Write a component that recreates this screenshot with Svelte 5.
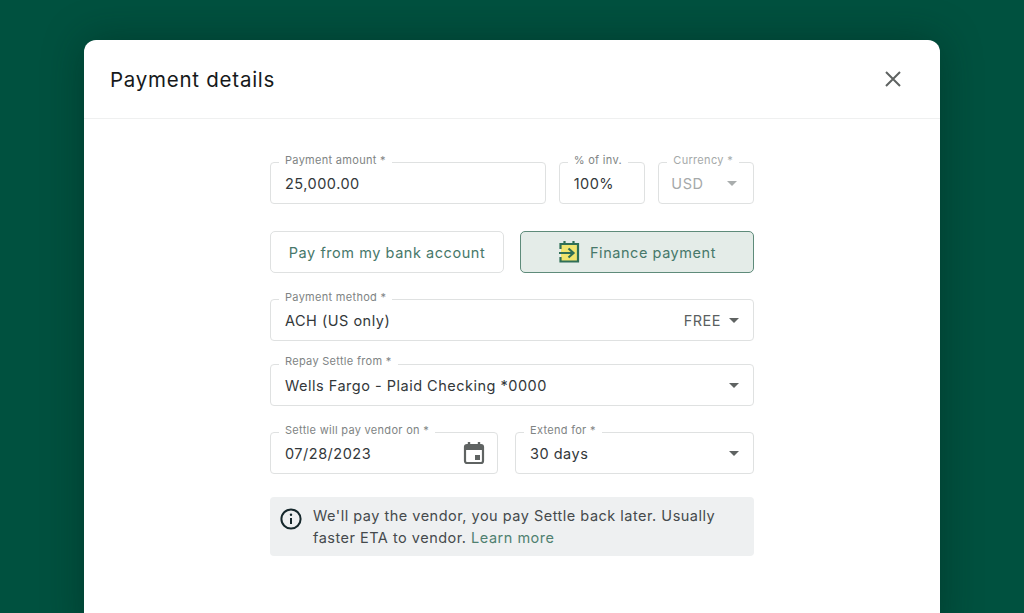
<script>
  const closeIcon = 'M2 2 L16 16 M16 2 L2 16';
</script>

<div class="page">
  <div class="modal">
    <header class="modal-header">
      <h2>Payment details</h2>
      <button class="close-button" aria-label="Close modal">
        <svg width="18" height="18" viewBox="0 0 18 18"><path d={closeIcon} fill="none" stroke="#5f6362" stroke-width="2" /></svg>
      </button>
    </header>

    <div class="modal-body">
      <form class="form">
        <div class="row amounts">
          <div class="field amount">
            <span class="label">Payment amount *</span>
            <span class="value">25,000.00</span>
          </div>
          <div class="field percent">
            <span class="label">% of inv.</span>
            <span class="value">100%</span>
          </div>
          <div class="field currency disabled">
            <span class="label">Currency *</span>
            <span class="value">USD</span>
            <span class="caret"></span>
          </div>
        </div>

        <div class="row toggle">
          <button type="button" class="option">Pay from my bank account</button>
          <button type="button" class="option active">
            <svg width="22" height="24" viewBox="0 0 22 24">
              <rect x="3" y="4" width="17" height="18" fill="#f0e56e" />
              <path d="M6.5 1 V5 M15.5 1 V5" stroke="#2f6f57" stroke-width="2.2" />
              <path d="M2.5 9 V4 H20 V21.5 H2.5 V17" fill="none" stroke="#2f6f57" stroke-width="2.2" />
              <path d="M1 13 H15 M10.5 8.5 L15.5 13 L10.5 17.5" fill="none" stroke="#2f6f57" stroke-width="2.2" />
            </svg>
            Finance payment
          </button>
        </div>

        <div class="field method">
          <span class="label">Payment method *</span>
          <span class="value">ACH (US only)</span>
          <span class="free">FREE</span>
          <span class="caret"></span>
        </div>

        <div class="field repay">
          <span class="label">Repay Settle from *</span>
          <span class="value">Wells Fargo - Plaid Checking *0000</span>
          <span class="caret"></span>
        </div>

        <div class="row dates">
          <div class="field date">
            <span class="label">Settle will pay vendor on *</span>
            <span class="value">07/28/2023</span>
            <svg class="calendar" width="22" height="24" viewBox="0 0 22 24">
              <path d="M6 1 V5 M16 1 V5" stroke="#5f6362" stroke-width="2.4" />
              <rect x="2" y="4" width="18" height="18" rx="2" fill="none" stroke="#5f6362" stroke-width="2.2" />
              <rect x="2" y="4" width="18" height="5" fill="#5f6362" />
              <rect x="12" y="14" width="5" height="5" fill="#5f6362" />
            </svg>
          </div>
          <div class="field extend">
            <span class="label">Extend for *</span>
            <span class="value">30 days</span>
            <span class="caret"></span>
          </div>
        </div>

        <div class="notice">
          <svg width="22" height="22" viewBox="0 0 22 22">
            <circle cx="11" cy="11" r="9.6" fill="none" stroke="#16282c" stroke-width="2" />
            <path d="M11 10 V16" stroke="#16282c" stroke-width="2" />
            <circle cx="11" cy="6.8" r="1.2" fill="#16282c" />
          </svg>
          <p>We'll pay the vendor, you pay Settle back later. Usually faster ETA to vendor. <span class="link">Learn more</span></p>
        </div>
      </form>
    </div>
  </div>
</div>

<style>
  :global(body) {
    margin: 0;
    background: #00513f;
  }

  .page {
    height: 613px;
    box-sizing: border-box;
    padding: 40px 84px 0;
    overflow: hidden;
    background: #00513f;
    font-family: Inter, "Liberation Sans", sans-serif;
  }

  .modal {
    height: 600px;
    background: #fff;
    border-radius: 12px;
    box-shadow: 0 0 40px rgba(0, 30, 22, 0.4);
  }

  .modal-header {
    height: 79px;
    box-sizing: border-box;
    display: flex;
    justify-content: space-between;
    align-items: center;
    padding: 0 38px 0 26px;
    border-bottom: 1px solid #eff0f0;
  }

  .modal-header h2 {
    margin: 0;
    font-size: 20.5px;
    font-weight: 400;
    letter-spacing: 0.75px;
    color: #16191a;
  }

  .close-button {
    display: flex;
    padding: 0;
    background: none;
    border: none;
  }

  .modal-body {
    display: flex;
    justify-content: center;
    padding-top: 43px;
  }

  .form {
    width: 484px;
    display: flex;
    flex-direction: column;
  }

  .row {
    display: flex;
  }

  .amounts {
    gap: 13px;
  }

  .toggle {
    gap: 17px;
    margin-top: 27px;
  }

  .field {
    position: relative;
    height: 42px;
    box-sizing: border-box;
    display: flex;
    align-items: center;
    padding: 0 14px;
    border: 1px solid #dfe1e1;
    border-radius: 4px;
    font-size: 14.5px;
    letter-spacing: 0.5px;
    color: #33383a;
  }

  .label {
    position: absolute;
    top: -10px;
    left: 8px;
    padding: 0 6px;
    background: #fff;
    font-size: 11px;
    line-height: 14px;
    letter-spacing: 0.3px;
    color: #808484;
    white-space: nowrap;
  }

  .value {
    flex: 1;
    white-space: nowrap;
  }

  .amount {
    width: 277px;
  }

  .percent {
    width: 87px;
  }

  .currency {
    width: 96px;
    padding: 0 16px 0 12px;
  }

  .disabled .value,
  .disabled .label {
    color: #a5a9a9;
  }

  .disabled .caret {
    border-top-color: #a9adad;
  }

  .caret {
    width: 0;
    height: 0;
    border-left: 5.5px solid transparent;
    border-right: 5.5px solid transparent;
    border-top: 5.5px solid #5f6362;
  }

  .option {
    flex: 0 0 auto;
    height: 42px;
    display: flex;
    align-items: center;
    justify-content: center;
    gap: 10px;
    padding: 0;
    font-family: inherit;
    font-size: 14.5px;
    letter-spacing: 0.55px;
    color: #47786a;
    background: #fff;
    border: 1px solid #dfe1e1;
    border-radius: 5px;
  }

  .option:first-child {
    width: 234px;
  }

  .option.active {
    width: 234px;
    margin-left: -1px;
    background: #e4ece8;
    border-color: #5e8b7a;
  }

  .method {
    margin-top: 26px;
  }

  .free {
    margin-right: 8px;
    color: #5b5f61;
  }

  .repay {
    margin-top: 23px;
  }

  .repay .label {
    top: -11px;
  }

  .dates {
    gap: 17px;
    margin-top: 26px;
  }

  .date {
    width: 228px;
  }

  .calendar {
    margin-right: -2px;
  }

  .extend {
    width: 239px;
  }

  .notice {
    display: flex;
    gap: 11px;
    margin-top: 23px;
    height: 59px;
    box-sizing: border-box;
    padding: 8px 10px;
    background: #eef0f1;
    border-radius: 4px;
  }

  .notice svg {
    flex: none;
    margin-top: 3px;
  }

  .notice p {
    margin: 0;
    font-size: 14.5px;
    line-height: 21.5px;
    letter-spacing: 0.5px;
    color: #454a4c;
  }

  .link {
    color: #4f8070;
  }
</style>
